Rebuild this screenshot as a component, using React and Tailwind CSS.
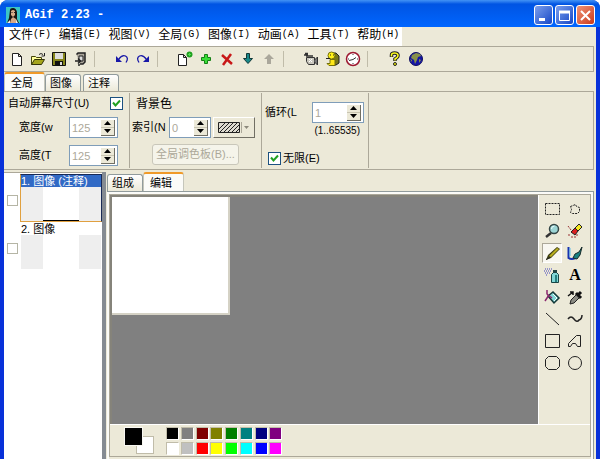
import { useState } from "react";

const menus = [
    ["文件", "(F)"],
    ["编辑", "(E)"],
    ["视图", "(V)"],
    ["全局", "(G)"],
    ["图像", "(I)"],
    ["动画", "(A)"],
    ["工具", "(T)"],
    ["帮助", "(H)"],
];

const toolbar = [
    "new", "open", "save", "exit", null,
    "undo", "redo", null,
    "newImage", "plus", "remove", "down", "up", null,
    "camera", "smiley", "clock", null,
    "help", "globe",
];

const tools = [
    "select", "lasso",
    "zoom", "eraser",
    "pencil", "brush",
    "spray", "text",
    "fill", "picker",
    "line", "curve",
    "rect", "polygon",
    "roundRect", "ellipse",
];

const palette = [
    "bg-black", "bg-[#808080]", "bg-[#800000]", "bg-[#808000]",
    "bg-[#008000]", "bg-[#008080]", "bg-[#000080]", "bg-[#800080]",
    "bg-white", "bg-[#c0c0c0]", "bg-[#ff0000]", "bg-[#ffff00]",
    "bg-[#00ff00]", "bg-[#00ffff]", "bg-[#0000ff]", "bg-[#ff00ff]",
];

const drawings = {
    new: (
        <path d="M3.5 2.5h6l3 3v9h-9zM9.5 2.5v3h3" fill="#fff" stroke="#222" />
    ),
    open: (
        <>
            <path d="M1.5 13.5v-8h4l1 1h5v3" fill="#ffff9a" stroke="#45450a" />
            <path d="M1.5 13.5l3-5h10l-3 5z" fill="#a5a51c" stroke="#33330a" />
            <path d="M9 3.5q2-2 4 0M14.5 2v3h-3" fill="none" stroke="#222" />
        </>
    ),
    save: (
        <>
            <path d="M1.5 1.5h13v13h-13z" fill="#85851c" stroke="#111" />
            <path d="M4 2h8v6H4z" fill="#ddd" />
            <path d="M4 10h8v4H4z" fill="#111" />
            <path d="M9 11h2v3H9z" fill="#ddd" />
        </>
    ),
    exit: (
        <>
            <path d="M4.5 3.5L6 2h7v9l-2 2h-3" fill="#aaa59a" stroke="#222" strokeWidth="1.5" />
            <path d="M7 5h4v5H7z" fill="#ddd" stroke="#222" />
            <path d="M3 10h5M6 7.5L8.5 10 6 12.5M7 13v2" fill="none" stroke="#222" strokeWidth="1.5" />
        </>
    ),
    undo: (
        <>
            <path d="M4.500 8.500q3.500-5 7-3.500 3.500 2 .5 6.500" fill="none" stroke="#1818a8" strokeWidth="1.300" />
            <path d="M2 5v6h6z" fill="#1818a8" />
        </>
    ),
    redo: (
        <>
            <path d="M11.500 8.500q-3.500-5-7-3.500-3.500 2-.5 6.500" fill="none" stroke="#1818a8" strokeWidth="1.300" />
            <path d="M14 5v6H8z" fill="#1818a8" />
        </>
    ),
    newImage: (
        <>
            <path d="M1.5 3.5h5l3 3v8h-8zM6.5 3.5v3h3" fill="#fff" stroke="#222" />
            <circle cx="12.5" cy="3.5" r="3" fill="#20a020" />
            <path d="M12.5 2v3M11 3.5h3" stroke="#50dd50" />
        </>
    ),
    plus: (
        <path d="M6.5 3.5h3v3h3v3h-3v3h-3v-3h-3v-3h3z" fill="#38dd38" stroke="#168016" />
    ),
    remove: (
        <path d="M3 4l10 9M12 3L4 14" stroke="#c81818" strokeWidth="2.5" />
    ),
    down: (
        <path d="M6.5 2.5h3v5h3L8 12.5 3.5 7.5h3z" fill="#188888" stroke="#103838" />
    ),
    up: (
        <path d="M8 3l5 5h-3v5H6V8H3z" fill="#aaa79b" />
    ),
    camera: (
        <>
            <path d="M1 4h4M2 2.5h3M3 5h7" stroke="#333" strokeWidth="1.5" />
            <path d="M3.5 6.5h8v7h-6l-2-3z" fill="#c9c7bd" stroke="#333" />
            <path d="M11.5 9l3-3v8l-3-3" fill="#777" stroke="#333" />
            <path d="M6 8l3 3M9 8l-3 3" stroke="#fff" />
        </>
    ),
    smiley: (
        <>
            <path d="M9 2h3l3 3v7l-3 2H9z" fill="#77771b" stroke="#222" />
            <circle cx="7.5" cy="4.5" r="3.5" fill="#fff018" stroke="#74700a" />
            <path d="M6 8.5h5v6H5l-2-2h3z" fill="#ffe818" stroke="#74700a" />
            <path d="M2 7.5h4M6 4h1M9 4h1" stroke="#222" />
        </>
    ),
    clock: (
        <>
            <circle cx="8" cy="8" r="6.5" fill="#fff" stroke="#9d1830" strokeWidth="1.5" />
            <path d="M8 3v1M8 12v1M3 8h1M12 8h1M4 9.5l4-1 3-2" fill="none" stroke="#333" />
        </>
    ),
    help: (
        <>
            <path d="M4.5 6V4q0-2 3-2t3.5 2-3 4v2" fill="none" stroke="#222" strokeWidth="3.5" />
            <path d="M4.5 5.5V4q0-2 3-2t3.5 2-3 4v1.5" fill="none" stroke="#ffff20" strokeWidth="1.5" />
            <circle cx="8" cy="13" r="1.5" fill="#ee0" stroke="#222" />
        </>
    ),
    globe: (
        <>
            <circle cx="8" cy="8" r="6.5" fill="#1515a5" stroke="#101060" />
            <path d="M4 4l4-2 4 1 1 2-3 1-1 3-2 4-1-4-3-2z" fill="#87904a" />
            <path d="M11 8l2 1-2 3zM2 8l2 1v2z" fill="#87904a" />
        </>
    ),
    select: (
        <path d="M1.5 2.5h14v11h-14z" fill="none" stroke="#222" strokeDasharray="2 1" />
    ),
    lasso: (
        <path d="M3.5 5.5l5-2 1 2 3 1v4l-2 2h-5l-2-1 1-3z" fill="none" stroke="#222" strokeDasharray="2 1" />
    ),
    zoom: (
        <>
            <path d="M2 14l5-4" stroke="#333" strokeWidth="2.5" />
            <circle cx="10" cy="6" r="4.5" fill="#9cd5d5" stroke="#334545" strokeWidth="1.500" />
            <path d="M7.5 6q0-3 3-3" fill="none" stroke="#eff" />
        </>
    ),
    eraser: (
        <>
            <path d="M12 1l3 3-4 4-3-3z" fill="#f5e820" stroke="#222" />
            <path d="M8 5l3 3-3 4-4-3z" fill="#dc2020" stroke="#222" />
            <path d="M1 3l3 4M1 12h2M4 14h5M9 12h3" stroke="#933" strokeDasharray="2 1" />
        </>
    ),
    pencil: (
        <>
            <path d="M2 15l2-5 9-8 3 2-9 9z" fill="#3d3d12" />
            <path d="M5 11l8-8 2 1-8 8z" fill="#b8ae20" />
            <path d="M2 14.5l4-2" stroke="#222" />
        </>
    ),
    brush: (
        <>
            <path d="M1.5 2v11q3 2 7 0" fill="none" stroke="#1632b0" strokeWidth="2" />
            <path d="M3 3v8" stroke="#59bdea" />
            <path d="M15 2l-3 5-4 2-2 4 4 1 3-4z" fill="#188080" stroke="#162929" />
        </>
    ),
    spray: (
        <>
            <path d="M7.5 7.5l2-2h3l2 2v8h-7z" fill="#80d5d5" stroke="#174545" />
            <path d="M9 3h4v3H9z" fill="#244" />
            <path d="M1 2h7M0 4h8M1 6h5M2 8h2" stroke="#4242b8" strokeDasharray="1 1" />
            <path d="M12 8v7" stroke="#278080" strokeWidth="2" />
        </>
    ),
    fill: (
        <>
            <path d="M4 7l5-4 6 6-5 5z" fill="#80d5d5" stroke="#153838" strokeWidth="1.5" />
            <path d="M9 5l4 4-3 3" fill="none" stroke="#f4ffff" />
            <path d="M3 1v4l5 4M1 12l4-6" fill="none" stroke="#8b286d" strokeWidth="1.500" />
        </>
    ),
    picker: (
        <>
            <path d="M3 15l1-4 6-6 3 3-6 6z" fill="#8b8b83" stroke="#222" />
            <path d="M9 4l5 5M11 6l3-3" stroke="#111" strokeWidth="3" />
            <path d="M1 7l5-4M3 3h3v3" fill="none" stroke="#111" strokeWidth="1.5" />
        </>
    ),
    line: (
        <path d="M2 2l13 12" stroke="#222" />
    ),
    curve: (
        <path d="M1 8q3-4 6 0t5 1q3-1 3-5" fill="none" stroke="#222" strokeWidth="1.5" />
    ),
    rect: (
        <path d="M1.5 1.5h14v13h-14z" fill="none" stroke="#222" />
    ),
    polygon: (
        <path d="M1.5 13.500v-3l8-8h4v11h-3l-2-3h-3l-2 3z" fill="none" stroke="#222" />
    ),
    roundRect: (
        <path d="M4.5 1.5h8l3 3v7l-3 3h-8l-3-3v-7z" fill="none" stroke="#222" />
    ),
    ellipse: (
        <circle cx="8" cy="8" r="6.5" fill="none" stroke="#222" />
    ),
};

function Icon({ name }) {

    if (name === "text") {
        return <span className="font-['Liberation_Serif',serif] text-base font-bold leading-4">A</span>;
    }

    return (
        <svg viewBox="0 0 16 16" className="h-4 w-4 overflow-visible" aria-hidden="true">
            {drawings[name]}
        </svg>
    );

}

function Check({ id, checked, onChange }) {

    return (
        <span className="relative flex h-[13px] w-[13px] shrink-0">
            <input
                id={id}
                type="checkbox"
                checked={checked}
                onChange={(e) => onChange(e.target.checked)}
                className="h-[13px] w-[13px] appearance-none border border-[#1c5180] bg-white"
            />
            {checked && (
                <svg viewBox="0 0 13 13" className="pointer-events-none absolute inset-0">
                    <path d="M3 5.5l2.5 3L10 3.5" fill="none" stroke="#21a121" strokeWidth="2" />
                </svg>
            )}
        </span>
    );

}

function Spin({ id, value, className }) {

    return (
        <span className={`flex h-[21px] items-center border border-[#7f9db9] bg-white pr-0.5 ${className}`}>
            <input
                id={id}
                disabled
                defaultValue={value}
                className="w-full min-w-0 flex-1 pl-0.5 text-[11px] text-[#aca899]"
            />
            <span className="flex h-4 w-3.5 shrink-0 flex-col border-r border-b border-[#716f64] bg-[#ece9d8]">
                <button aria-label="+" className="flex flex-1 items-center justify-center">
                    <svg viewBox="0 0 7 4" className="h-1 w-[7px]"><path d="M0 4l3.5-4L7 4z" /></svg>
                </button>
                <button aria-label="-" className="flex flex-1 items-center justify-center border-t border-[#c9c5b2]">
                    <svg viewBox="0 0 7 4" className="h-1 w-[7px]"><path d="M0 0l3.5 4L7 0z" /></svg>
                </button>
            </span>
        </span>
    );

}

function Tab({ active, children }) {

    return (
        <button
            role="tab"
            aria-selected={active}
            className={
                active
                    ? "-mb-px h-5 rounded-t-[3px] border-x border-t-2 border-x-[#c5c6bb] border-t-[#f09a28] bg-[#fbfbf8] pr-[11px] pl-1.5"
                    : "h-[17px] rounded-t-[3px] border border-b-0 border-[#919b9c] bg-linear-to-b from-white to-[#ece9d8] pr-2 pl-1"
            }
        >
            {children}
        </button>
    );

}

function Frame({ id, label, selected }) {

    return (
        <li className="flex items-center gap-0.5 pl-[3px]">
            <input
                id={id}
                type="checkbox"
                className="mt-1 h-[11px] w-[11px] shrink-0 appearance-none border border-[#b5b5a5] bg-white"
            />
            <div
                className={
                    selected
                        ? "flex h-12 flex-1 flex-col border border-[#192a55] border-b-[#e0a040] border-l-[#e0a040] bg-white"
                        : "flex h-12 flex-1 flex-col border border-transparent bg-white"
                }
            >
                <label
                    htmlFor={id}
                    className={selected ? "bg-[#316ac5] leading-3 text-white" : "leading-3"}
                >
                    {label}
                </label>
                <div className="flex flex-1 justify-between">
                    <span className="w-[22px] bg-[#eeeeee]" />
                    <span className={selected ? "flex-1 border-b border-black" : "flex-1"} />
                    <span className="w-[22px] bg-[#eeeeee]" />
                </div>
            </div>
        </li>
    );

}

function CaptionButton({ label, className, children }) {

    return (
        <button
            aria-label={label}
            className={`flex h-5 w-[19px] items-center justify-center rounded-[3px] border border-white ${className}`}
        >
            <svg viewBox="0 0 15 15" className="h-[15px] w-[15px]" fill="none" stroke="#fff">
                {children}
            </svg>
        </button>
    );

}

export default function App() {

    const [autoSize, setAutoSize] = useState(true);
    const [infinite, setInfinite] = useState(true);
    const [tool, setTool] = useState("pencil");

    return (

        <div className="flex min-h-screen flex-col overflow-hidden rounded-t-lg bg-[#0831d9] font-['Liberation_Sans','Noto_Sans_CJK_SC',sans-serif] text-[11px] leading-none text-black">

            <header className="flex h-[27px] items-center bg-linear-to-b from-[#4293f5] via-[#0054e3] via-15% to-[#0066ff] pt-[3px] pr-[5px] pl-1.5">

                <svg viewBox="0 0 14 16" className="h-4 w-3.5" aria-hidden="true">
                    <path d="M0 0h14v16H0z" fill="#3cc5c5" />
                    <path d="M4 3q0-2 3-2t4 4v7l2 4H1l2-5z" fill="#1b1510" />
                    <path d="M5 4q2-2 4 0v4l-2 2-2-2z" fill="#d8ae8a" />
                    <path d="M5 12l2-2 3 2v4H4z" fill="#d4a988" />
                    <path d="M5.5 5.5h1M8 5.5h1" stroke="#222" />
                    <path d="M1 16l3-3v3zM10 12l2 4h-2z" fill="#eee" />
                </svg>

                <h1 className="ml-[5px] flex-1 font-['Liberation_Mono',monospace] text-xs font-bold text-white">
                    AGif 2.23 -
                </h1>

                <div className="flex gap-0.5">
                    <CaptionButton label="最小化" className="bg-linear-to-br from-[#7c9eec] to-[#1644c5]">
                        <path d="M3 11.5h6" strokeWidth="3" />
                    </CaptionButton>
                    <CaptionButton label="最大化" className="bg-linear-to-br from-[#7c9eec] to-[#1644c5]">
                        <path d="M2.5 3.5h10v9h-10z" />
                        <path d="M2 4h11" strokeWidth="3" />
                    </CaptionButton>
                    <CaptionButton label="关闭" className="bg-linear-to-br from-[#ef9275] to-[#c93614]">
                        <path d="M3 3l9 9M12 3l-9 9" strokeWidth="2" />
                    </CaptionButton>
                </div>

            </header>

            <main className="mx-1 flex flex-1 flex-col bg-[#ece9d8]">

                <nav className="h-[19px]">
                    <div className="grid h-full w-[398px] grid-cols-8 bg-white">
                        {menus.map(([name, key]) => (
                            <button key={name} className="flex items-center pb-1 pl-[5px] text-xs leading-none">
                                {name}
                                <span className="font-['Liberation_Mono',monospace] text-[10px]">{key}</span>
                            </button>
                        ))}
                    </div>
                </nav>

                <div className="mr-0.5 flex h-[26px] items-center border-y border-r border-[#aca899] pl-0.5">
                    {toolbar.map((name, i) =>
                        name ? (
                            <button key={name} aria-label={name} className="flex h-5 w-[21px] items-center justify-center">
                                <Icon name={name} />
                            </button>
                        ) : (
                            <span key={i} className="h-4 w-[21px] pl-1">
                                <span className="block h-full w-px bg-[#c0bca9]" />
                            </span>
                        )
                    )}
                </div>

                <div role="tablist" className="flex h-[19px] items-end">
                    <Tab active>全局</Tab>
                    <Tab>图像</Tab>
                    <span className="w-0.5" />
                    <Tab>注释</Tab>
                </div>

                <section className="mr-0.5 flex h-[79px] border border-l-0 border-[#aca899] py-px">

                    <div className="flex w-[126px] flex-col border-r border-[#aca899] pt-1 pl-1">
                        <div className="flex items-center justify-between pr-1.5">
                            <label htmlFor="auto">自动屏幕尺寸(U)</label>
                            <Check id="auto" checked={autoSize} onChange={setAutoSize} />
                        </div>
                        <div className="mt-[7px] flex items-center justify-between pr-[11px] pl-[11px]">
                            <label htmlFor="width">宽度(w</label>
                            <Spin id="width" value="125" className="w-[49px]" />
                        </div>
                        <div className="mt-[7px] flex items-center justify-between pr-[11px] pl-[11px]">
                            <label htmlFor="height">高度(T</label>
                            <Spin id="height" value="125" className="w-[49px]" />
                        </div>
                    </div>

                    <div className="flex w-[132px] flex-col border-r border-[#aca899] pt-[5px] pl-0.5">
                        <h2 className="pl-1 text-xs leading-3">背景色</h2>
                        <div className="mt-[7px] flex items-center">
                            <label htmlFor="index" className="w-[37px] whitespace-nowrap">索引(N</label>
                            <Spin id="index" value="0" className="w-[42px]" />
                            <button
                                aria-label="背景色"
                                className="ml-0.5 flex h-[21px] w-[42px] items-center border border-white border-r-[#716f64] border-b-[#716f64] pl-1"
                            >
                                <svg viewBox="0 0 35 13" className="h-[13px] w-[35px]">
                                    <path d="M.5 1.5h21v10H.5z" fill="#dedbd0" stroke="#222" />
                                    <path d="M1 8l6-6M1 12L11 2M5 12L15 2M9 12L19 2M13 12l8-8M17 12l4-4" stroke="#222" />
                                    <path d="M23.5 1v11" stroke="#aca899" />
                                    <path d="M26 5h5l-2.5 3z" fill="#8c897c" />
                                </svg>
                            </button>
                        </div>
                        <button
                            disabled
                            className="mt-1.5 ml-5 h-[21px] w-[87px] rounded-[3px] border border-[#c9c7ba] bg-[#f5f4ea] text-[#aca899]"
                        >
                            全局调色板(B)...
                        </button>
                    </div>

                    <div className="flex w-[107px] flex-col border-r border-[#aca899] pt-[9px] pr-1 pl-[3px]">
                        <div className="flex items-center justify-between">
                            <label htmlFor="loop">循环(L</label>
                            <Spin id="loop" value="1" className="w-[52px]" />
                        </div>
                        <span className="mt-0.5 mr-1 text-right text-[10px] leading-3">(1..65535)</span>
                        <div className="mt-[15px] flex items-center gap-0.5 pl-[3px]">
                            <Check id="infinite" checked={infinite} onChange={setInfinite} />
                            <label htmlFor="infinite">无限(E)</label>
                        </div>
                    </div>

                </section>

                <div className="mt-0.5 flex flex-1">

                    <aside className="w-[98px] border-t border-[#aca899] bg-white pt-px">
                        <ul>
                            <Frame id="frame1" label="1. 图像 (注释)" selected />
                            <Frame id="frame2" label="2. 图像" />
                        </ul>
                    </aside>

                    <div className="w-1 bg-[#858b92]" />

                    <div className="flex flex-1 flex-col pr-0.5 pl-px">

                        <div role="tablist" className="flex h-[19px] items-end">
                            <Tab>组成</Tab>
                            <Tab active>编辑</Tab>
                        </div>

                        <div className="flex flex-1 flex-col border-t border-r border-[#919b9c] bg-[#fbfbf8] pt-0.5 pr-0.5 pl-0.5">

                            <div className="flex flex-1 flex-col border border-[#aca899] bg-[#ece9d8]">

                                <div className="flex flex-1">

                                    <div className="flex-1 border-t-2 border-l-2 border-[#85837a] bg-[#808080]">
                                        <div className="h-[118px] w-[118px] border-r-2 border-b-2 border-[#d5d2c5] bg-white" />
                                    </div>

                                    <div className="grid w-[52px] grid-cols-2 content-start border-l border-white pt-[3px] pr-0.5 pl-[3px]">
                                        {tools.map((name) => (
                                            <button
                                                key={name}
                                                aria-label={name}
                                                aria-pressed={tool === name}
                                                onClick={() => setTool(name)}
                                                className="flex h-[22px] items-center"
                                            >
                                                <span
                                                    className={
                                                        tool === name
                                                            ? "flex h-5 w-5 items-center justify-center border border-[#aca899] border-r-white border-b-white bg-[#f8f7f1]"
                                                            : "flex h-5 w-5 items-center justify-center"
                                                    }
                                                >
                                                    <Icon name={name} />
                                                </span>
                                            </button>
                                        ))}
                                    </div>

                                </div>

                                <div className="flex h-8 items-start border-t border-white pt-0.5 pl-3.5">

                                    <div className="grid h-[27px] w-[30px] shrink-0">
                                        <span className="col-start-1 row-start-1 h-[18px] w-[18px] place-self-end border border-[#c0bca9] bg-white" />
                                        <span className="col-start-1 row-start-1 h-[19px] w-[19px] border border-[#f8f7f1] bg-black" />
                                    </div>

                                    <div className="ml-3 grid w-[118px] grid-cols-8 gap-y-0.5">
                                        {palette.map((color) => (
                                            <button
                                                key={color}
                                                aria-label={color}
                                                className={`h-[13px] w-[13px] border border-[#c0bca9] border-r-white border-b-white ${color}`}
                                            />
                                        ))}
                                    </div>

                                </div>

                            </div>

                            <div className="h-0.5 bg-[#ece9d8]" />

                        </div>

                    </div>

                </div>

            </main>

        </div>

    );

}
